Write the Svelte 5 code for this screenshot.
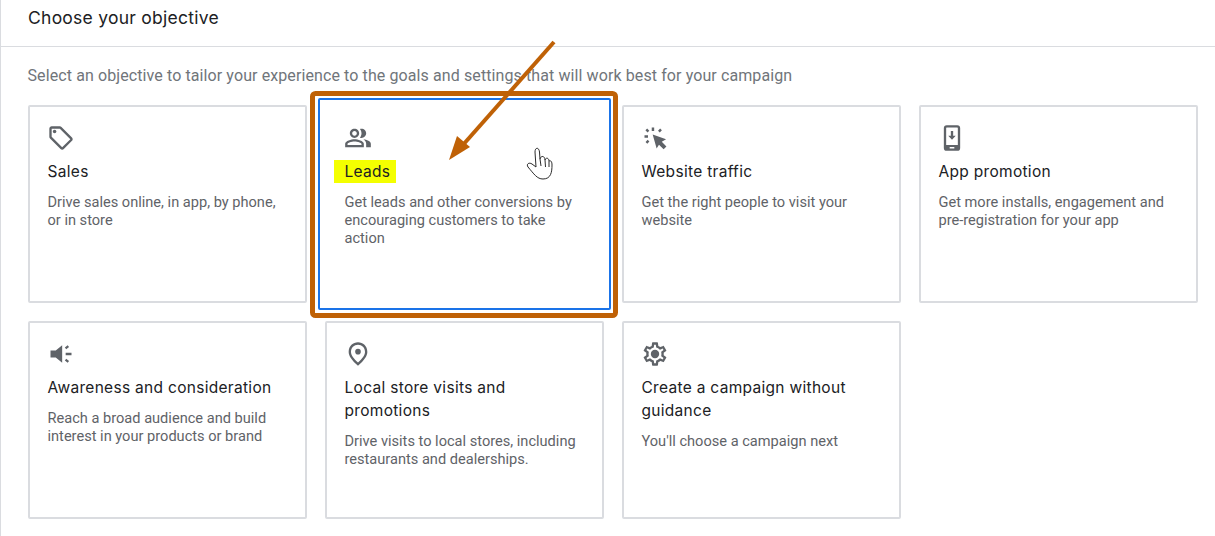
<script>
  const cards = [
    { id: 'sales', title: 'Sales', desc: 'Drive sales online, in app, by phone, or in store' },
    { id: 'leads', title: 'Leads', desc: 'Get leads and other conversions by encouraging customers to take action' },
    { id: 'traffic', title: 'Website traffic', desc: 'Get the right people to visit your website' },
    { id: 'app', title: 'App promotion', desc: 'Get more installs, engagement and pre-registration for your app' },
    { id: 'aware', title: 'Awareness and consideration', desc: 'Reach a broad audience and build interest in your products or brand' },
    { id: 'local', title: 'Local store visits and promotions', desc: 'Drive visits to local stores, including restaurants and dealerships.' },
    { id: 'none', title: 'Create a campaign without guidance', desc: "You'll choose a campaign next" }
  ];
</script>

<div class="page">
  <header class="head"><h1>Choose your objective</h1></header>
  <p class="sub">Select an objective to tailor your experience to the goals and settings that will work best for your campaign</p>
  <div class="grid">
    {#each cards as c}
      <div class="card" class:leads={c.id === 'leads'}>
        <svg class="icon" viewBox="0 0 24 24" fill="#5f6368">
          {#if c.id === 'sales'}
            <path d="M21.41 11.58l-9-9C12.05 2.22 11.55 2 11 2H4c-1.1 0-2 .9-2 2v7c0 .55.22 1.05.59 1.42l9 9c.36.36.86.58 1.41.58.55 0 1.05-.22 1.41-.59l7-7c.37-.36.59-.86.59-1.41 0-.55-.23-1.06-.59-1.42zM13 20.01L4 11V4h7v-.01l9 8.99-7 7.02z" />
            <circle cx="6.5" cy="6.5" r="1.5" />
          {:else if c.id === 'leads'}
            <path d="M16.67 13.13C18.04 14.06 19 15.32 19 17v3h4v-3c0-2.18-3.57-3.47-6.33-3.87zM15 12c2.21 0 4-1.79 4-4s-1.79-4-4-4c-.47 0-.91.1-1.33.24C14.5 5.27 15 6.58 15 8s-.5 2.73-1.33 3.76c.42.14.86.24 1.33.24zM9 12c2.21 0 4-1.79 4-4s-1.79-4-4-4-4 1.79-4 4 1.79 4 4 4zm0-6c1.1 0 2 .9 2 2s-.9 2-2 2-2-.9-2-2 .9-2 2-2zM9 13c-2.67 0-8 1.34-8 4v3h16v-3c0-2.66-5.33-4-8-4zm6 5H3v-.99C3.2 16.29 6.3 15 9 15s5.8 1.29 6 2v1z" />
          {:else if c.id === 'traffic'}
            <path d="M10 9 L21.5 13 L17.8 15.3 L21.8 19.3 L19.4 21.7 L15.4 17.7 L13.4 21 Z" />
            <path d="M9.2 3h2.1v3H9.2zM3 9.6h3v2.1H3zM3.8 5.4l1.5-1.5 1.8 1.8-1.5 1.5zM14.6 5.7l1.8-1.8 1.5 1.5-1.8 1.8zM3.9 15.4l1.8-1.8 1.5 1.5-1.8 1.8z" />
          {:else if c.id === 'app'}
            <path fill-rule="evenodd" d="M7.5 1h9A2.5 2.5 0 0 1 19 3.5v17a2.5 2.5 0 0 1-2.5 2.5h-9A2.5 2.5 0 0 1 5 20.5v-17A2.5 2.5 0 0 1 7.5 1zM7 3.5V18h10V3.5a.5.5 0 0 0-.5-.5h-9a.5.5 0 0 0-.5.5zM10 19.7v1.3h4v-1.3z" />
            <path d="M11 6h2v4h2.2L12 13.6 8.8 10H11z" />
          {:else if c.id === 'aware'}
            <path d="M3 9h4.5L13 4.5v15L7.5 15H3z" />
            <path d="M16 11h5v2h-5zM15.3 6.4l2.4-1.9 1.2 1.6-2.4 1.9zM15.3 17.6l1.2-1.6 2.4 1.9-1.2 1.6z" />
          {:else if c.id === 'local'}
            <path d="M12 2c-4.2 0-8 3.22-8 8.2 0 3.32 2.67 7.25 8 11.8 5.33-4.55 8-8.48 8-11.8C20 5.22 16.2 2 12 2zm0 17.34c-4.05-3.7-6-6.8-6-9.14C6 6.57 8.65 4 12 4s6 2.57 6 6.2c0 2.34-1.95 5.44-6 9.14z" />
            <circle cx="12" cy="10" r="2.4" />
          {:else}
            <path d="M19.43 12.98c.04-.32.07-.64.07-.98 0-.34-.03-.66-.07-.98l2.11-1.65c.19-.15.24-.42.12-.64l-2-3.46c-.09-.16-.26-.25-.44-.25-.06 0-.12.01-.17.03l-2.49 1c-.52-.4-1.08-.73-1.69-.98l-.38-2.65C14.46 2.18 14.25 2 14 2h-4c-.25 0-.46.18-.49.42l-.38 2.65c-.61.25-1.17.59-1.69.98l-2.49-1c-.06-.02-.12-.03-.18-.03-.17 0-.34.09-.43.25l-2 3.46c-.13.22-.07.49.12.64l2.11 1.65c-.04.32-.07.65-.07.98 0 .33.03.66.07.98l-2.11 1.65c-.19.15-.24.42-.12.64l2 3.46c.09.16.26.25.44.25.06 0 .12-.01.17-.03l2.49-1c.52.4 1.08.73 1.69.98l.38 2.65c.03.24.24.42.49.42h4c.25 0 .46-.18.49-.42l.38-2.65c.61-.25 1.17-.59 1.69-.98l2.49 1c.06.02.12.03.18.03.17 0 .34-.09.43-.25l2-3.46c.12-.22.07-.49-.12-.64l-2.11-1.65zm-1.98-1.71c.04.31.05.52.05.73 0 .21-.02.43-.05.73l-.14 1.13.89.7 1.08.84-.7 1.21-1.27-.51-1.04-.42-.9.68c-.43.32-.84.56-1.25.73l-1.06.43-.16 1.13-.2 1.35h-1.4l-.19-1.35-.16-1.13-1.06-.43c-.43-.18-.83-.41-1.23-.71l-.91-.7-1.06.43-1.27.51-.7-1.21 1.08-.84.89-.7-.14-1.13c-.03-.31-.05-.54-.05-.74s.02-.43.05-.73l.14-1.13-.89-.7-1.08-.84.7-1.21 1.27.51 1.04.42.9-.68c.43-.32.84-.56 1.25-.73l1.06-.43.16-1.13.2-1.35h1.39l.19 1.35.16 1.13 1.06.43c.43.18.83.41 1.23.71l.91.7 1.06-.43 1.27-.51.7 1.21-1.07.85-.89.7.14 1.13z" />
            <circle cx="12" cy="12" r="3.6" />
          {/if}
        </svg>
        <h2><span>{c.title}</span></h2>
        <p>{c.desc}</p>
      </div>
    {/each}
  </div>

  <svg class="notes" width="1215" height="536" viewBox="0 0 1215 536">
    <rect x="312.5" y="93.5" width="303" height="222" rx="3" fill="none" stroke="#bf6106" stroke-width="5" />
    <line x1="554" y1="42" x2="462" y2="146" stroke="#bf6106" stroke-width="4" />
    <polygon points="449,160 457,136 470,147" fill="#bf6106" />
    <path d="M536 167 L535 152 C535 147 539 147 539.5 152 L540 159 C541 155 545 156 545 160 C546 157 549 158 549 161 C551 160 552 162 552 165 C552 172 551 179 543 179 C537 179 534 174 528 167 C526 164 529 162 532 164 L536 167 M540 159 L541 166 M545 160 L545.5 167 M549 161 L549 167" fill="#fff" stroke="#2b2b2b" stroke-width="1" stroke-linejoin="round" />
  </svg>
</div>

<style>
  :global(body) {
    margin: 0;
    background: #fff;
  }
  .page {
    position: relative;
    box-sizing: border-box;
    width: 1215px;
    height: 536px;
    overflow: hidden;
    border-left: 1px solid #dadce0;
    font-family: Roboto, "Liberation Sans", sans-serif;
  }
  .head {
    box-sizing: border-box;
    height: 47px;
    border-bottom: 1px solid #dadce0;
    padding: 6px 0 0 27px;
  }
  h1 {
    margin: 0;
    font: 400 17.5px/24px Inter, Roboto, sans-serif;
    letter-spacing: 0.25px;
    color: #202124;
  }
  .sub {
    margin: 0;
    padding: 18px 0 0 26.5px;
    font-size: 16px;
    letter-spacing: 0.1px;
    line-height: 22px;
    color: #70757a;
  }
  .grid {
    display: grid;
    grid-template-columns: repeat(4, 279px);
    grid-auto-rows: 198px;
    gap: 18px;
    margin: 18px 0 0 27px;
  }
  .card {
    position: relative;
    box-sizing: border-box;
    border: 2px solid #dadce0;
    border-radius: 2px;
    padding: 17px 17.5px 0;
  }
  .card.leads {
    border-color: transparent;
  }
  .card.leads::after {
    content: "";
    position: absolute;
    inset: -9px;
    border: 2.5px solid #1a73e8;
    border-radius: 2px;
  }
  .icon {
    display: block;
    width: 28px;
    height: 28px;
    margin-left: -1px;
  }
  h2 {
    margin: 8px 0 0;
    font: 400 15.5px/23px Inter, Roboto, sans-serif;
    letter-spacing: 0.3px;
    color: #202124;
  }
  .leads h2 span {
    display: inline-block;
    background: #f4ff00;
    padding: 0 6px 0 11px;
    margin-left: -11px;
    position: relative;
    z-index: 1;
  }
  .card p {
    margin: 10px 0 0;
    font-size: 14.6px;
    line-height: 18px;
    color: #5f6368;
  }
  .notes {
    position: absolute;
    left: -1px;
    top: 0;
    pointer-events: none;
  }
</style>
